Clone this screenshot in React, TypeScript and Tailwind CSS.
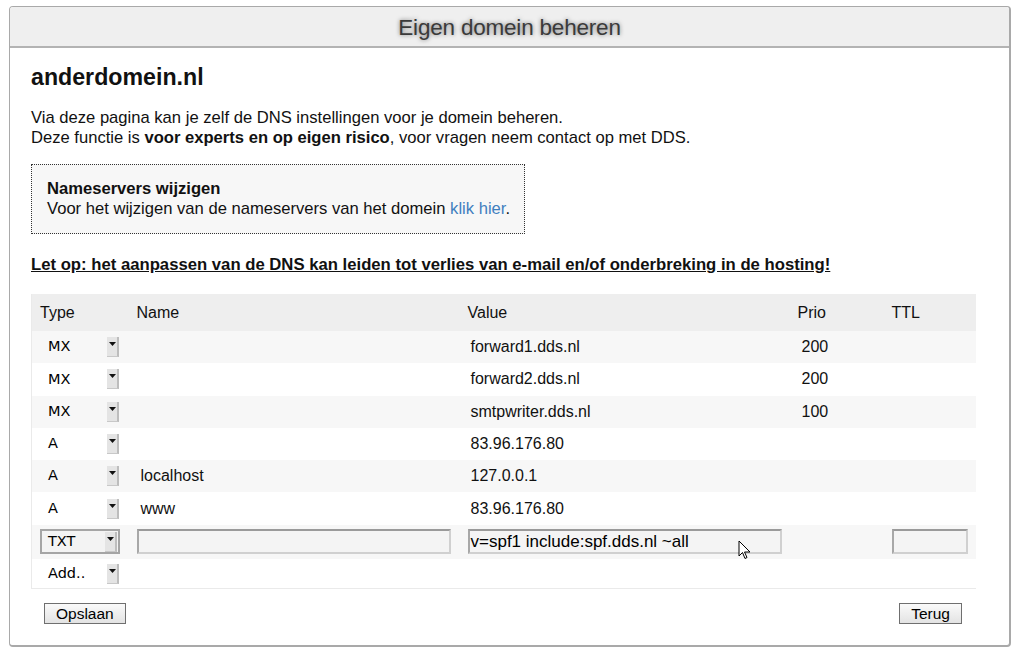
import React from 'react';

type Rec = { type: string; name: string; value: string; prio: string };

const RECORDS: Rec[] = [
  { type: 'MX', name: '', value: 'forward1.dds.nl', prio: '200' },
  { type: 'MX', name: '', value: 'forward2.dds.nl', prio: '200' },
  { type: 'MX', name: '', value: 'smtpwriter.dds.nl', prio: '100' },
  { type: 'A', name: '', value: '83.96.176.80', prio: '' },
  { type: 'A', name: 'localhost', value: '127.0.0.1', prio: '' },
  { type: 'A', name: 'www', value: '83.96.176.80', prio: '' },
];

function Arrow() {
  return (
    <span className="flex h-[20px] w-[12px] items-start justify-center border-r-2 border-b border-r-[#bdbdbd] border-b-[#c8c8c8] bg-[#e4e4e4] pt-[5px]">
      <svg width="7" height="4" viewBox="0 0 7 4">
        <path d="M0 0h7L3.5 4z" fill="#111" />
      </svg>
    </span>
  );
}

function FakeSelect({ label, boxed }: { label: string; boxed?: boolean }) {
  if (boxed) {
    return (
      <div className="ml-[8px] flex h-[25px] w-[80px] items-center border-2 border-[#a5a5a5] bg-[#f3f3f3] pl-[6px] pr-[1px]">
        <span className="flex-1 font-['DejaVu_Sans',sans-serif] text-[14.5px] text-black">{label}</span>
        <Arrow />
      </div>
    );
  }
  return (
    <div className="ml-[10px] flex h-[25px] w-[78px] items-center pl-[6px] pr-[1px]">
      <span className="flex-1 font-['DejaVu_Sans',sans-serif] text-[14.5px] text-black">{label}</span>
      <Arrow />
    </div>
  );
}

function Field({ w, value }: { w: string; value?: string }) {
  return (
    <div
      className={`${w} flex h-[25px] items-center border-2 border-t-[#9a9a9a] border-l-[#a8a8a8] border-r-[#d0d0d0] border-b-[#d0d0d0] bg-[#f4f4f4] pl-[1px] text-[17px] text-black`}
    >
      {value}
    </div>
  );
}

function Button({ children }: { children: React.ReactNode }) {
  return (
    <button className="h-[21px] border border-[#6f6f6f] bg-gradient-to-b from-[#fafafa] to-[#e3e3e3] px-[11px] text-[15.5px] leading-none text-black">
      {children}
    </button>
  );
}

export default function App() {
  return (
    <div className="min-h-[651px] bg-white pl-[9px] pt-[6px] font-['Liberation_Sans',Arial,sans-serif] text-[#111]">
      <div className="h-[641px] w-[1002px] overflow-hidden rounded-[4px] border-2 border-t border-l border-[#a9a9a9]">
        <div className="flex h-[41px] items-center justify-center border-b-2 border-[#b3b3b3] bg-[#efefef] pt-[2px]">
          <span className="text-[22.5px] tracking-[-0.2px] text-[#3a3a3a] [text-shadow:0_0_4px_rgba(0,0,0,0.5)]">Eigen domein beheren</span>
        </div>

        <div className="relative px-[21px]">
          <h1 className="mt-[15px] text-[23.2px] font-bold leading-[28px] text-[#111]">anderdomein.nl</h1>

          <p className="mt-[17px] text-[16.6px] leading-[19.5px]">
            Via deze pagina kan je zelf de DNS instellingen voor je domein beheren.
            <br />
            Deze functie is <b>voor experts en op eigen risico</b>, voor vragen neem contact op met DDS.
          </p>

          <div className="mt-[17px] h-[70px] w-[494px] border border-dotted border-[#333] bg-[#f7f7f7] pl-[15px] pt-[14px] text-[16.6px] leading-[20px]">
            <div className="font-bold">Nameservers wijzigen</div>
            <div>
              Voor het wijzigen van de nameservers van het domein{' '}
              <a className="text-[#3f7fbf]">klik hier</a>.
            </div>
          </div>

          <div className="mt-[21px] text-[16.7px] font-bold leading-[20px] underline">
            Let op: het aanpassen van de DNS kan leiden tot verlies van e-mail en/of onderbreking in de hosting!
          </div>

          <table className="mt-[19px] w-[945px] table-fixed border-collapse border-b border-l border-[#eaeaea] text-[16px]">
            <colgroup>
              <col className="w-[97px]" />
              <col className="w-[331px]" />
              <col className="w-[330px]" />
              <col className="w-[94px]" />
              <col />
            </colgroup>
            <thead>
              <tr className="h-[37px] bg-[#eeeeee] text-left">
                <th className="pl-[8px] font-normal">Type</th>
                <th className="pl-[8px] font-normal">Name</th>
                <th className="pl-[8px] font-normal">Value</th>
                <th className="pl-[8px] font-normal">Prio</th>
                <th className="pl-[8px] font-normal">TTL</th>
              </tr>
            </thead>
            <tbody>
              {RECORDS.map((r, i) => (
                <tr key={i} className={`h-[32.3px] ${i % 2 === 0 ? 'bg-[#f7f7f7]' : 'bg-white'}`}>
                  <td className="p-0">
                    <FakeSelect label={r.type} />
                  </td>
                  <td className="pl-[12px]">{r.name}</td>
                  <td className="pl-[11px]">{r.value}</td>
                  <td className="pl-[12px]">{r.prio}</td>
                  <td />
                </tr>
              ))}
              <tr className="h-[34px] bg-[#f7f7f7]">
                <td className="p-0">
                  <FakeSelect label="TXT" boxed />
                </td>
                <td className="pl-[8px]">
                  <Field w="w-[314px]" />
                </td>
                <td className="pl-[8px]">
                  <Field w="w-[314px]" value="v=spf1 include:spf.dds.nl ~all" />
                </td>
                <td />
                <td className="pl-[8px]">
                  <Field w="w-[76px]" />
                </td>
              </tr>
              <tr className="h-[30px] bg-white">
                <td className="p-0">
                  <FakeSelect label="Add.." />
                </td>
                <td />
                <td />
                <td />
                <td />
              </tr>
            </tbody>
          </table>

          <div className="mt-[14px] flex items-center justify-between pl-[13px] pr-[26px]">
            <Button>Opslaan</Button>
            <Button>Terug</Button>
          </div>

          <svg
            className="absolute left-[728px] top-[477px]"
            width="14"
            height="20"
            viewBox="0 0 14 20"
          >
            <path d="M1 1v15l3.5-3.5 2.5 6 2-1-2.5-5.5H12z" fill="#fff" stroke="#000" strokeWidth="1" strokeLinejoin="round" />
          </svg>
        </div>
      </div>
    </div>
  );
}
